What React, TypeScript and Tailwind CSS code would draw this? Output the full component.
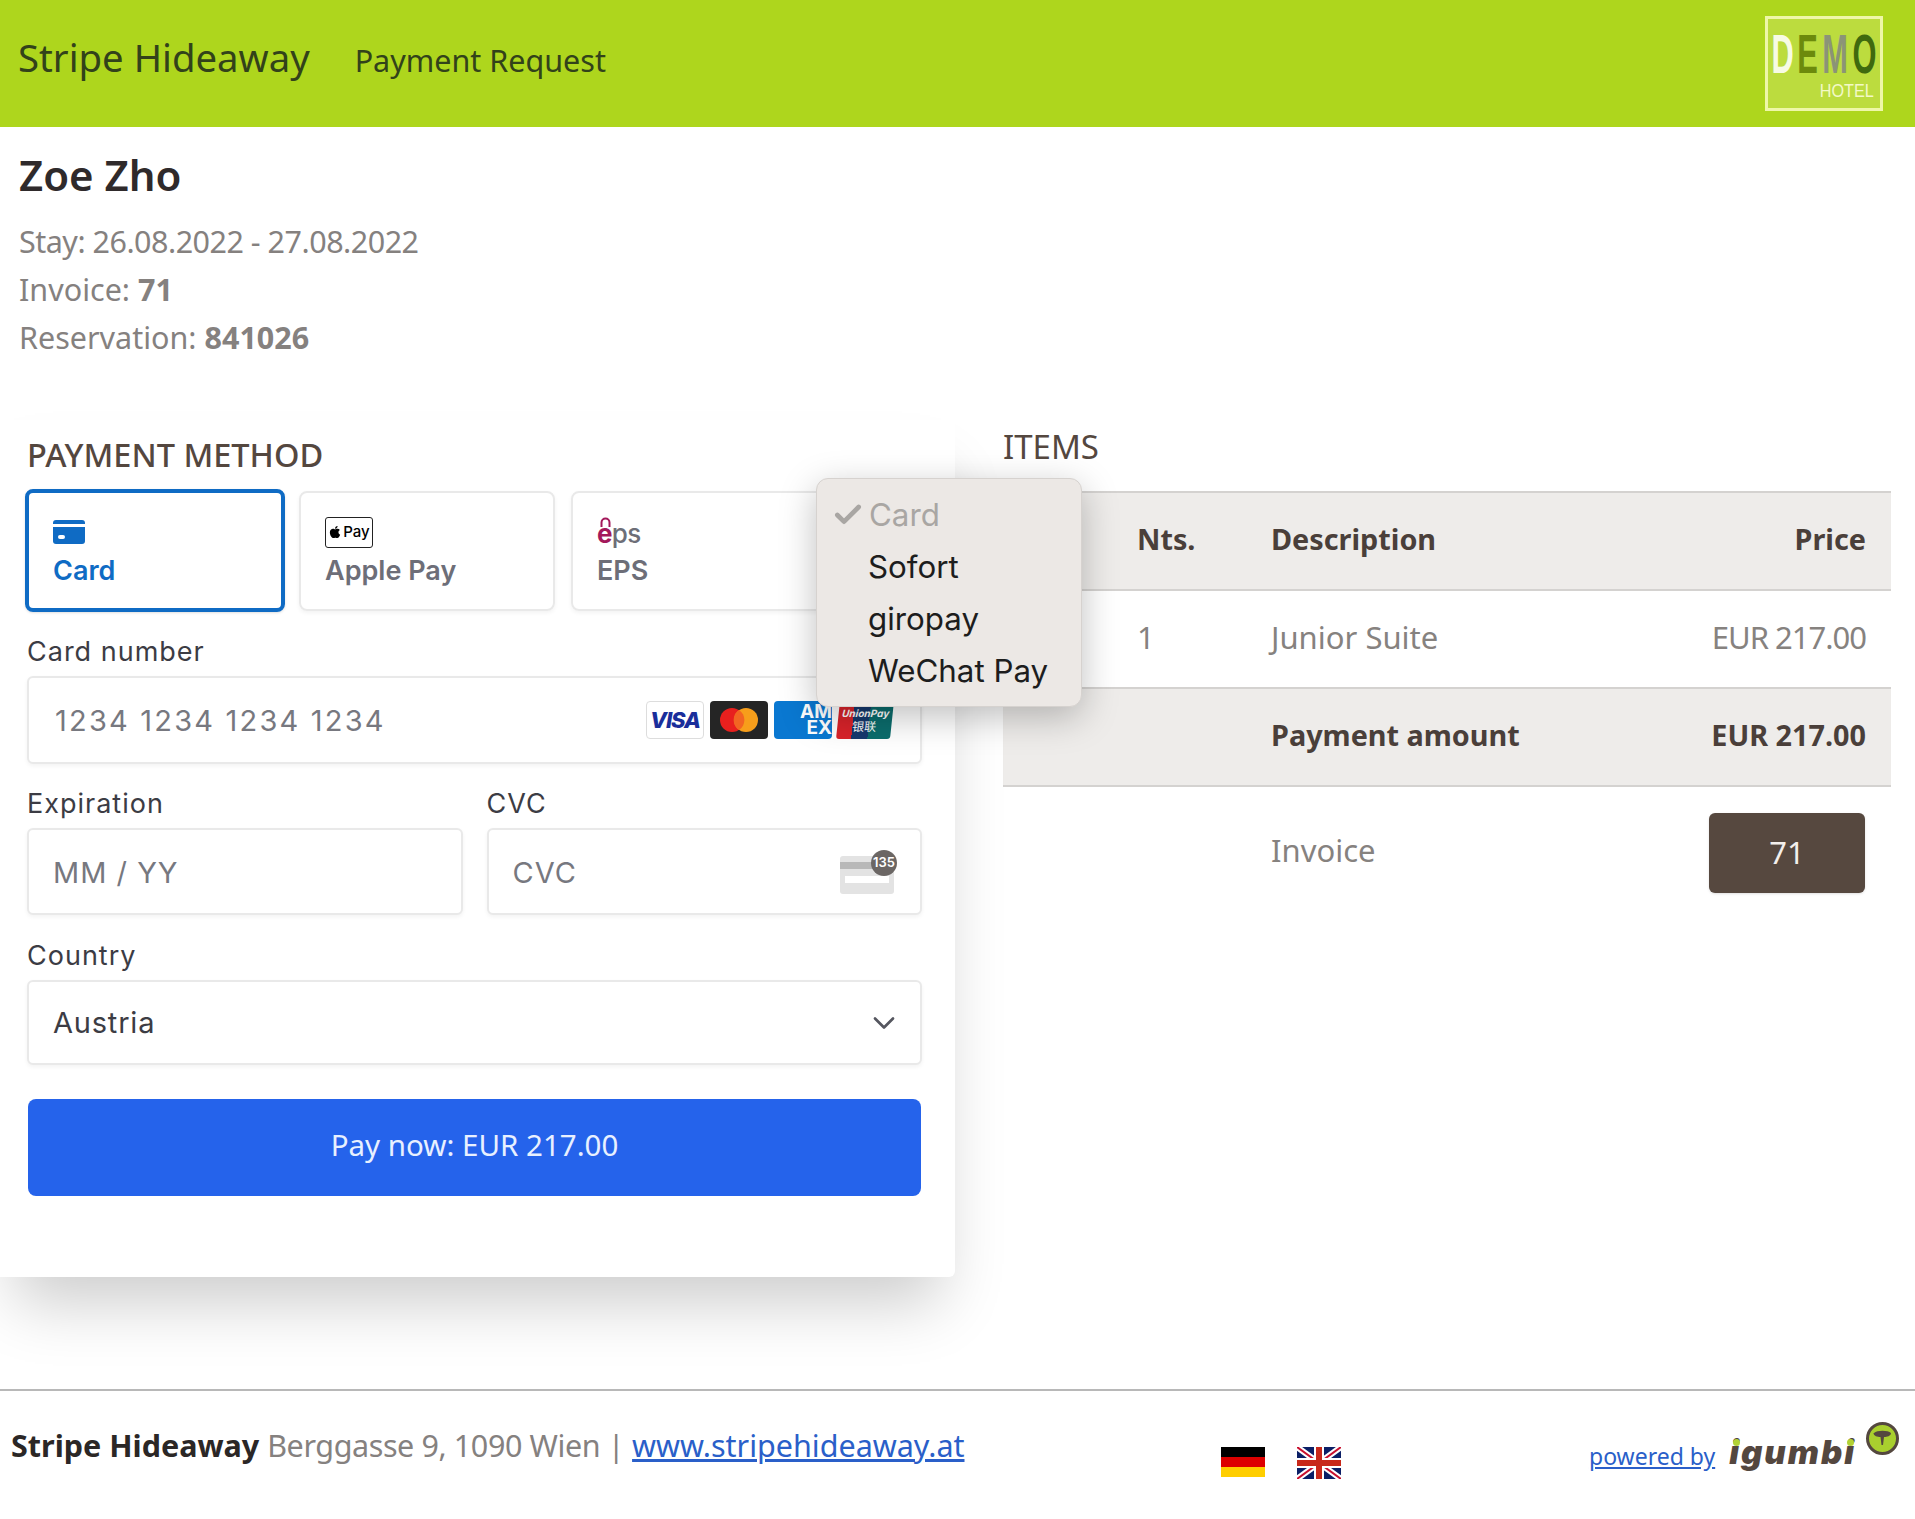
import { Check, ChevronDown } from "lucide-react";
import { FaApple } from "react-icons/fa";

const sans = "font-['Noto_Sans',sans-serif]";
const stripeFont = "font-['Inter','Noto_Sans',sans-serif]";
const fieldBox =
  "flex items-center rounded-md border-2 border-[#e9e9e9] bg-white shadow-[0_2px_4px_rgba(0,0,0,0.05)]";

function DemoLogo() {
  return (
    <div className="flex h-[95px] w-[118px] flex-col items-center border-[3px] border-[#eef7a8] bg-[#bcdc3e] font-['Liberation_Sans',sans-serif] leading-none">
      <div className="mt-[7px] flex w-full justify-center gap-[3px] text-[56px] font-bold">
        <span className="inline-flex w-[23px] justify-center scale-x-[0.55] text-[#f7fbe4]">D</span>
        <span className="inline-flex w-[21px] justify-center scale-x-[0.55] text-[#6c8a0c]">E</span>
        <span className="inline-flex w-[28px] justify-center scale-x-[0.55] text-[#8b9477]">M</span>
        <span className="inline-flex w-[25px] justify-center scale-x-[0.55] text-[#3f6a0e]">O</span>
      </div>
      <div className="w-full origin-right scale-x-[0.9] pr-[7px] text-right text-[18px] text-[#f3f9c7]">HOTEL</div>
    </div>
  );
}

function PayTab({ active, icon, label }: { active?: boolean; icon: React.ReactNode; label: string }) {
  return (
    <div
      className={
        active
          ? "flex h-[123px] w-[260px] shrink-0 flex-col justify-center rounded-lg border-[4px] border-[#0f6bc4] pl-[24px] pt-[4px] shadow-sm"
          : "flex h-[120px] w-[256px] shrink-0 flex-col justify-center rounded-lg border-2 border-[#e9e9e9] pl-[24px] pt-[4px] shadow-[0_2px_4px_rgba(0,0,0,0.05)]"
      }
    >
      <div className="flex h-[32px] items-center">{icon}</div>
      <div className={`mt-[5px] text-[27px] font-semibold leading-[36px] ${active ? "text-[#0f6bc4]" : "text-[#6d6e78]"}`}>{label}</div>
    </div>
  );
}

function BrandIcons() {
  return (
    <div className="flex items-center gap-[6px]">
      <div className="flex h-[38px] w-[58px] items-center justify-center rounded-[4px] border border-[#dddddd] bg-white text-[22px] font-extrabold italic tracking-tighter text-[#1a2e9b]">
        VISA
      </div>
      <div className="flex h-[38px] w-[58px] items-center justify-center rounded-[4px] bg-[#252525]">
        <svg width="40" height="26" viewBox="0 0 40 26">
          <circle cx="13" cy="13" r="12" fill="#e8201e" />
          <circle cx="27" cy="13" r="12" fill="#f79e1b" />
          <path d="M20 3 a12 12 0 0 1 0 20 a12 12 0 0 1 0-20z" fill="#f26522" />
        </svg>
      </div>
      <div className="flex h-[38px] w-[58px] flex-col items-end justify-center rounded-[4px] bg-[#0a78d1] text-[19px] font-bold leading-[16px] text-white">
        <span>AM</span>
        <span>EX</span>
      </div>
      <div className="flex h-[38px] w-[54px] -skew-x-6 flex-col items-center justify-center rounded-[3px] bg-[linear-gradient(90deg,#d9232a_0_28%,#16396e_28%_58%,#0b6d6d_58%)] text-white">
        <span className="text-[10px] font-bold italic leading-[12px]">UnionPay</span>
        <span className="font-['Noto_Sans_CJK_SC',sans-serif] text-[12px] leading-[14px]">银联</span>
      </div>
    </div>
  );
}

function Label({ children }: { children: React.ReactNode }) {
  return <div className="text-[27px] leading-[34px] tracking-[1px] text-[#3c3c44]">{children}</div>;
}

function PaymentPanel() {
  return (
    <section className="relative h-[857px] rounded-br-md bg-white pl-[27px] pr-[33px] shadow-[0_40px_60px_-14px_rgba(0,0,0,0.2)]">
      <h2 className={`${sans} pt-[13px] text-[32.5px] font-medium leading-[44px] text-[#54473f]`}>PAYMENT METHOD</h2>
      <div className={`${stripeFont} -ml-[2px]`}>
        <div className="mt-[12px] flex items-center gap-[14px]">
          <PayTab
            active
            label="Card"
            icon={
              <svg width="32" height="26" viewBox="0 0 32 26">
                <path d="M3 1h26a3 3 0 0 1 3 3v1H0V4a3 3 0 0 1 3-3z" fill="#0f6bc4" />
                <path d="M0 8h32v14a3 3 0 0 1-3 3H3a3 3 0 0 1-3-3z" fill="#0f6bc4" />
                <rect x="5" y="16" width="7" height="4" rx="2" fill="#fff" />
              </svg>
            }
          />
          <PayTab
            label="Apple Pay"
            icon={
              <div className="flex h-[31px] w-[48px] items-center justify-center gap-[1px] rounded-[3px] border border-[#222222] bg-white text-[15px] font-medium text-black">
                <FaApple className="text-[14px]" />
                <span>Pay</span>
              </div>
            }
          />
          <div className="ml-[2px]">
            <PayTab
              label="EPS"
              icon={
                <div className="relative flex items-center pt-[3px] text-[26px] font-medium leading-none tracking-tight">
                  <span className="relative font-bold text-[#a3195b]">
                    e
                    <svg className="absolute -top-[4px] left-[3px]" width="11" height="10" viewBox="0 0 11 10">
                      <path d="M1.5 10V5.5a4 4 0 0 1 8 0V10" fill="none" stroke="#a3195b" strokeWidth="2" />
                    </svg>
                  </span>
                  <span className="text-[#6d6e78]">ps</span>
                </div>
              }
            />
          </div>
        </div>

        <div className="mt-[23px] ml-[2px]">
          <Label>Card number</Label>
          <div className={`${fieldBox} mt-[7px] h-[88px] justify-between pl-[26px] pr-[28px]`}>
            <span className="pt-[2px] text-[29px] tracking-[2.2px] text-[#77787f]">1234 1234 1234 1234</span>
            <BrandIcons />
          </div>

          <div className="mt-[23px] grid grid-cols-2 gap-[24px]">
            <div>
              <Label>Expiration</Label>
              <div className={`${fieldBox} mt-[7px] h-[87px] pl-[24px]`}>
                <span className="pt-[2px] text-[29px] tracking-[1px] text-[#77787f]">MM / YY</span>
              </div>
            </div>
            <div>
              <Label>CVC</Label>
              <div className={`${fieldBox} mt-[7px] h-[87px] justify-between pl-[24px] pr-[24px]`}>
                <span className="pt-[2px] text-[29px] tracking-[1px] text-[#77787f]">CVC</span>
                <div className="relative mt-[3px] h-[42px] w-[56px]">
                  <svg className="absolute bottom-0 left-0" width="54" height="38" viewBox="0 0 54 38">
                    <rect width="54" height="38" rx="3" fill="#e3e3e3" />
                    <rect y="6" width="54" height="7" fill="#b8b8b8" />
                    <rect x="5" y="20" width="44" height="7" fill="#ffffff" />
                  </svg>
                  <div className="absolute -right-[1px] -top-[2px] flex h-[26px] w-[26px] items-center justify-center rounded-full bg-[#6b6664] text-[13px] font-semibold text-white">
                    135
                  </div>
                </div>
              </div>
            </div>
          </div>

          <div className="mt-[24px]">
            <Label>Country</Label>
            <div className={`${fieldBox} mt-[7px] h-[85px] justify-between pl-[24px] pr-[18px]`}>
              <span className="text-[29px] tracking-[0.8px] text-[#3c3c44]">Austria</span>
              <ChevronDown size={36} strokeWidth={1.8} className="text-[#55565f]" />
            </div>
          </div>
        </div>
      </div>

      <button className={`${sans} mt-[34px] ml-[1px] flex h-[97px] w-[893px] items-center justify-center rounded-lg bg-[#2563eb] pb-[4px] text-[29.5px] text-[#e8f0ff]`}>
        Pay now: EUR 217.00
      </button>
    </section>
  );
}

function Row({ a, b, c, head, shaded }: { a?: string; b: string; c: string; head?: boolean; shaded?: boolean }) {
  return (
    <div
      className={`grid h-[98px] grid-cols-[268px_1fr_auto] items-center border-b-2 border-[#d4d2d0] pb-[4px] pr-[25px] ${
        shaded ? "bg-[#eeecea]" : ""
      } ${head ? "text-[28.8px] font-bold text-[#4a3f3a]" : "text-[31px] text-[#86827f]"}`}
    >
      <span className="pl-[134px]">{a}</span>
      <span>{b}</span>
      <span className={head ? "" : "tracking-[-1px]"}>{c}</span>
    </div>
  );
}

function ItemsPanel() {
  return (
    <section className="pl-[48px] pr-[24px]">
      <h2 className="pt-[5px] text-[33px] leading-[44px] text-[#54473f]">ITEMS</h2>
      <div className="mt-[22px] border-t-2 border-[#d4d2d0]">
        <Row head shaded a="Nts." b="Description" c="Price" />
        <Row a="1" b="Junior Suite" c="EUR 217.00" />
        <Row head shaded b="Payment amount" c="EUR 217.00" />
        <div className="grid h-[132px] grid-cols-[268px_1fr_auto] items-center pr-[26px] text-[31px] text-[#86827f]">
          <span />
          <span className="pb-[5px]">Invoice</span>
          <button className="flex h-[80px] w-[156px] items-center justify-center rounded-md bg-[#56483f] pb-[2px] text-[#f3efec] shadow-sm">71</button>
        </div>
      </div>
    </section>
  );
}

function PaymentMenu() {
  const items = ["Sofort", "giropay", "WeChat Pay"];
  return (
    <div className={`${stripeFont} absolute left-[816px] top-[58px] z-10 h-[229px] w-[266px] rounded-xl border border-[#d6d2cf] bg-[#ece8e5] pt-[10px] text-[31.3px] leading-[52px] text-[#1d1d1d] shadow-[0_10px_36px_rgba(0,0,0,0.25)]`}>
      <div className="flex items-center text-[#a9a6a3]">
        <Check size={32} strokeWidth={3.5} className="ml-[15px] mr-[5px]" />
        Card
      </div>
      {items.map((item) => (
        <div key={item} className="pl-[51px]">{item}</div>
      ))}
    </div>
  );
}

function FlagDE() {
  return (
    <svg width="44" height="30" viewBox="0 0 44 30">
      <rect width="44" height="10" fill="#000000" />
      <rect y="10" width="44" height="10" fill="#dd0000" />
      <rect y="20" width="44" height="10" fill="#ffce00" />
    </svg>
  );
}

function FlagUK() {
  return (
    <svg width="44" height="32" viewBox="0 0 44 32">
      <rect width="44" height="32" fill="#0b1f66" />
      <path d="M0 0l44 32M44 0L0 32" stroke="#ffffff" strokeWidth="6" />
      <path d="M0 0l44 32M44 0L0 32" stroke="#c8102e" strokeWidth="2" />
      <path d="M22 0v32M0 16h44" stroke="#ffffff" strokeWidth="10" />
      <path d="M22 0v32M0 16h44" stroke="#c8281a" strokeWidth="6" />
    </svg>
  );
}

function IgumbiLogo() {
  return (
    <div className="flex items-start">
      <span className="relative mt-[14px] font-['Inter',sans-serif] text-[33px] font-black italic leading-none tracking-[2px] text-[#54473f]">
        igumbi
        <span className="absolute left-[4px] top-[3px] h-[7px] w-[7px] rounded-full bg-[#b2d235]" />
        <span className="absolute right-[2px] top-[3px] h-[7px] w-[7px] rounded-full bg-[#b2d235]" />
      </span>
      <svg className="ml-[10px]" width="33" height="33" viewBox="0 0 33 33">
        <ellipse cx="16.5" cy="16.5" rx="15" ry="15" fill="#a9cf2e" stroke="#54473f" strokeWidth="3" />
        <path d="M8 11c3-3 14-3 17 0 0 3-4 4-7 4l-1 8h-1.500l-1-8c-3 0-7-1-7-4z" fill="#54473f" />
      </svg>
    </div>
  );
}

export default function App() {
  return (
    <div className={`${sans} relative h-[1519px] w-full overflow-hidden bg-white`}>
      <header className="flex h-[127px] items-center justify-between bg-[#aed61d] pl-[18px] pr-[32px]">
        <div className="-mt-[12px] flex items-baseline gap-[45px] text-[#32421a]">
          <span className="text-[38.3px]">Stripe Hideaway</span>
          <span className="text-[30.5px]">Payment Request</span>
        </div>
        <DemoLogo />
      </header>

      <div className="h-[293px] pl-[19px] pt-[20px]">
        <h1 className="text-[42px] font-semibold leading-[56px] text-[#2f2a2b]">Zoe Zho</h1>
        <div className="mt-[14px] text-[30.5px] leading-[48px] text-[#85817f]">
          <div className="tracking-[-0.5px]">Stay: 26.08.2022 - 27.08.2022</div>
          <div>Invoice: <b>71</b></div>
          <div>Reservation: <b>841026</b></div>
        </div>
      </div>

      <main className="relative grid h-[970px] grid-cols-[955px_1fr] content-start">
        <PaymentPanel />
        <ItemsPanel />
        <PaymentMenu />
      </main>

      <footer className="absolute left-0 top-[1389px] flex h-[130px] w-full items-start border-t-2 border-[#b8b8b8] bg-white pl-[11px] pr-[16px] pt-[31px]">
        <div className="w-[1210px] whitespace-nowrap text-[30.5px] leading-[46px] text-[#85817f]">
          <b className="text-[#2b2726]">Stripe Hideaway</b> <span className="tracking-[-0.4px]">Berggasse 9, 1090 Wien |</span> <a className="text-[#2a5fc9] underline">www.stripehideaway.at</a>
        </div>
        <div className="mt-[25px] flex items-start gap-[32px]">
          <FlagDE />
          <FlagUK />
        </div>
        <div className="ml-auto flex items-start gap-[14px]">
          <a className="mt-[17px] text-[23px] leading-[34px] text-[#2a5fc9] underline">powered by</a>
          <IgumbiLogo />
        </div>
      </footer>
    </div>
  );
}
